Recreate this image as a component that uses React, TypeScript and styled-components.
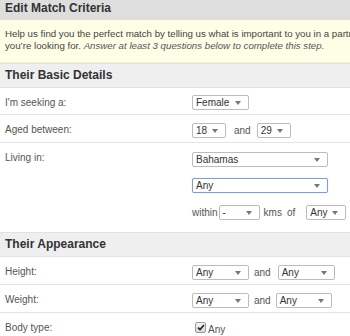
import React from 'react';
import styled, { createGlobalStyle } from 'styled-components';

const GlobalStyle = createGlobalStyle`
  html, body {
    margin: 0;
    padding: 0;
    background: #fff;
    overflow: hidden;
  }
  body {
    font-family: 'Liberation Sans', Arial, sans-serif;
    font-size: 10px;
    color: #555;
  }
`;

const Page = styled.div`
  width: 350px;
  height: 336px;
  overflow: hidden;
`;

const TitleBar = styled.div`
  background: #dedede;
  color: #333;
  font-size: 12px;
  font-weight: bold;
  padding: 2px 5px 5px;
  height: 13px;
  line-height: 13px;
`;

const Intro = styled.div`
  background: #fefee6;
  border-bottom: 1px solid #f1efc8;
  color: #444;
  font-size: 9.7px;
  padding: 8px 5px 10px;
  line-height: 12px;
  height: 24px;
  white-space: nowrap;
  overflow: hidden;

  em {
    font-style: italic;
    color: #555;
  }
`;

const SectionWrap = styled.div<{ $gap: number }>`
  margin-top: ${(p) => p.$gap}px;
`;

const SectionHeader = styled.div`
  background: #efefef;
  border-top: 1px solid #e2e2e2;
  border-bottom: 1px solid #e2e2e2;
  color: #333;
  font-size: 12px;
  font-weight: bold;
  padding: 0 5px;
  height: 23px;
  line-height: 23px;
`;

const FieldRow = styled.div<{ $last?: boolean }>`
  display: flex;
  padding: 7px 5px 4px;
  border-bottom: ${(p) => (p.$last ? 'none' : '1px solid #e4e4e4')};
`;

const Label = styled.div`
  width: 187px;
  flex-shrink: 0;
  line-height: 15px;
  color: #555;
`;

const Field = styled.div`
  display: flex;
`;

const Inline = styled.div`
  display: flex;
  align-items: center;
  height: 16px;
`;

const Stack = styled.div`
  display: flex;
  flex-direction: column;
  gap: 11px;
  padding-top: 2px;
`;

const Word = styled.span<{ $before?: number; $after?: number }>`
  color: #555;
  margin-left: ${(p) => p.$before ?? 6}px;
  margin-right: ${(p) => p.$after ?? 6}px;
`;

const SelectBox = styled.div<{ $width: number; $focused?: boolean }>`
  position: relative;
  box-sizing: border-box;
  width: ${(p) => p.$width}px;
  height: 15px;
  line-height: 13px;
  padding-left: 3px;
  border: 1px solid ${(p) => (p.$focused ? '#7d9fce' : '#bcbcbc')};
  box-shadow: ${(p) => (p.$focused ? '0 0 1px #a9c3e6' : 'none')};
  border-radius: 2px;
  background: #fff;
  color: #333;
  font-size: 10px;
`;

const Arrow = styled.span`
  position: absolute;
  right: 7px;
  top: 5px;
  width: 0;
  height: 0;
  border-left: 3.5px solid transparent;
  border-right: 3.5px solid transparent;
  border-top: 4px solid #777;
`;

const CheckLabel = styled.div`
  display: flex;
  align-items: flex-start;
  color: #555;
  padding-left: 3px;
  line-height: 15px;
`;

const CheckBox = styled.span`
  display: inline-flex;
  align-items: center;
  justify-content: center;
  box-sizing: border-box;
  width: 11px;
  height: 11px;
  margin-right: 2px;
  margin-top: 2px;
  border: 1px solid #9c9c9c;
  border-radius: 2px;
  background: linear-gradient(#f4f4f4, #d8d8d8);
`;

const CheckText = styled.span`
  margin-top: 2px;
`;

type Row = {
  label: string;
  content: React.ReactNode;
};

const Dropdown: React.FC<{ value: string; width: number; focused?: boolean }> = ({
  value,
  width,
  focused,
}) => (
  <SelectBox $width={width} $focused={focused}>
    <span>{value}</span>
    <Arrow />
  </SelectBox>
);

const basicRows = (): Row[] => [
  { label: "I'm seeking a:", content: <Dropdown value="Female" width={57} /> },
  {
    label: 'Aged between:',
    content: (
      <Inline>
        <Dropdown value="18" width={34} />
        <Word $before={8}>and</Word>
        <Dropdown value="29" width={34} />
      </Inline>
    ),
  },
  {
    label: 'Living in:',
    content: (
      <Stack>
        <Dropdown value="Bahamas" width={136} />
        <Dropdown value="Any" width={136} focused />
        <Inline>
          <Word $before={0} $after={1}>within</Word>
          <Dropdown value="-" width={41} />
          <Word $before={4} $after={5}>kms</Word>
          <Word $before={0} $after={11}>of</Word>
          <Dropdown value="Any" width={40} />
        </Inline>
      </Stack>
    ),
  },
];

const appearanceRows = (): Row[] => [
  {
    label: 'Height:',
    content: (
      <Inline>
        <Dropdown value="Any" width={57} />
        <Word $before={5} $after={7}>and</Word>
        <Dropdown value="Any" width={57} />
      </Inline>
    ),
  },
  {
    label: 'Weight:',
    content: (
      <Inline>
        <Dropdown value="Any" width={57} />
        <Word $before={5} $after={5}>and</Word>
        <Dropdown value="Any" width={56} />
      </Inline>
    ),
  },
  {
    label: 'Body type:',
    content: (
      <CheckLabel>
        <CheckBox>
          <svg width="8" height="7" viewBox="0 0 8 7">
            <path d="M1 3.6 L3 5.6 L7 1" fill="none" stroke="#222" strokeWidth="1.6" />
          </svg>
        </CheckBox>
        <CheckText>Any</CheckText>
      </CheckLabel>
    ),
  },
];

const Section: React.FC<{ title: string; rows: Row[]; gap: number }> = ({ title, rows, gap }) => (
  <SectionWrap $gap={gap}>
    <SectionHeader>{title}</SectionHeader>
    {rows.map((row, i) => (
      <FieldRow key={row.label} $last={i === rows.length - 1}>
        <Label>{row.label}</Label>
        <Field>{row.content}</Field>
      </FieldRow>
    ))}
  </SectionWrap>
);

export default function App() {
  return (
    <Page>
      <GlobalStyle />
      <TitleBar>Edit Match Criteria</TitleBar>
      <Intro>
        Help us find you the perfect match by telling us what is important to you in a partner
        <br />
        you&rsquo;re looking for. <em>Answer at least 3 questions below to complete this step.</em>
      </Intro>
      <Section title="Their Basic Details" rows={basicRows()} gap={0} />
      <Section title="Their Appearance" rows={appearanceRows()} gap={8} />
    </Page>
  );
}
